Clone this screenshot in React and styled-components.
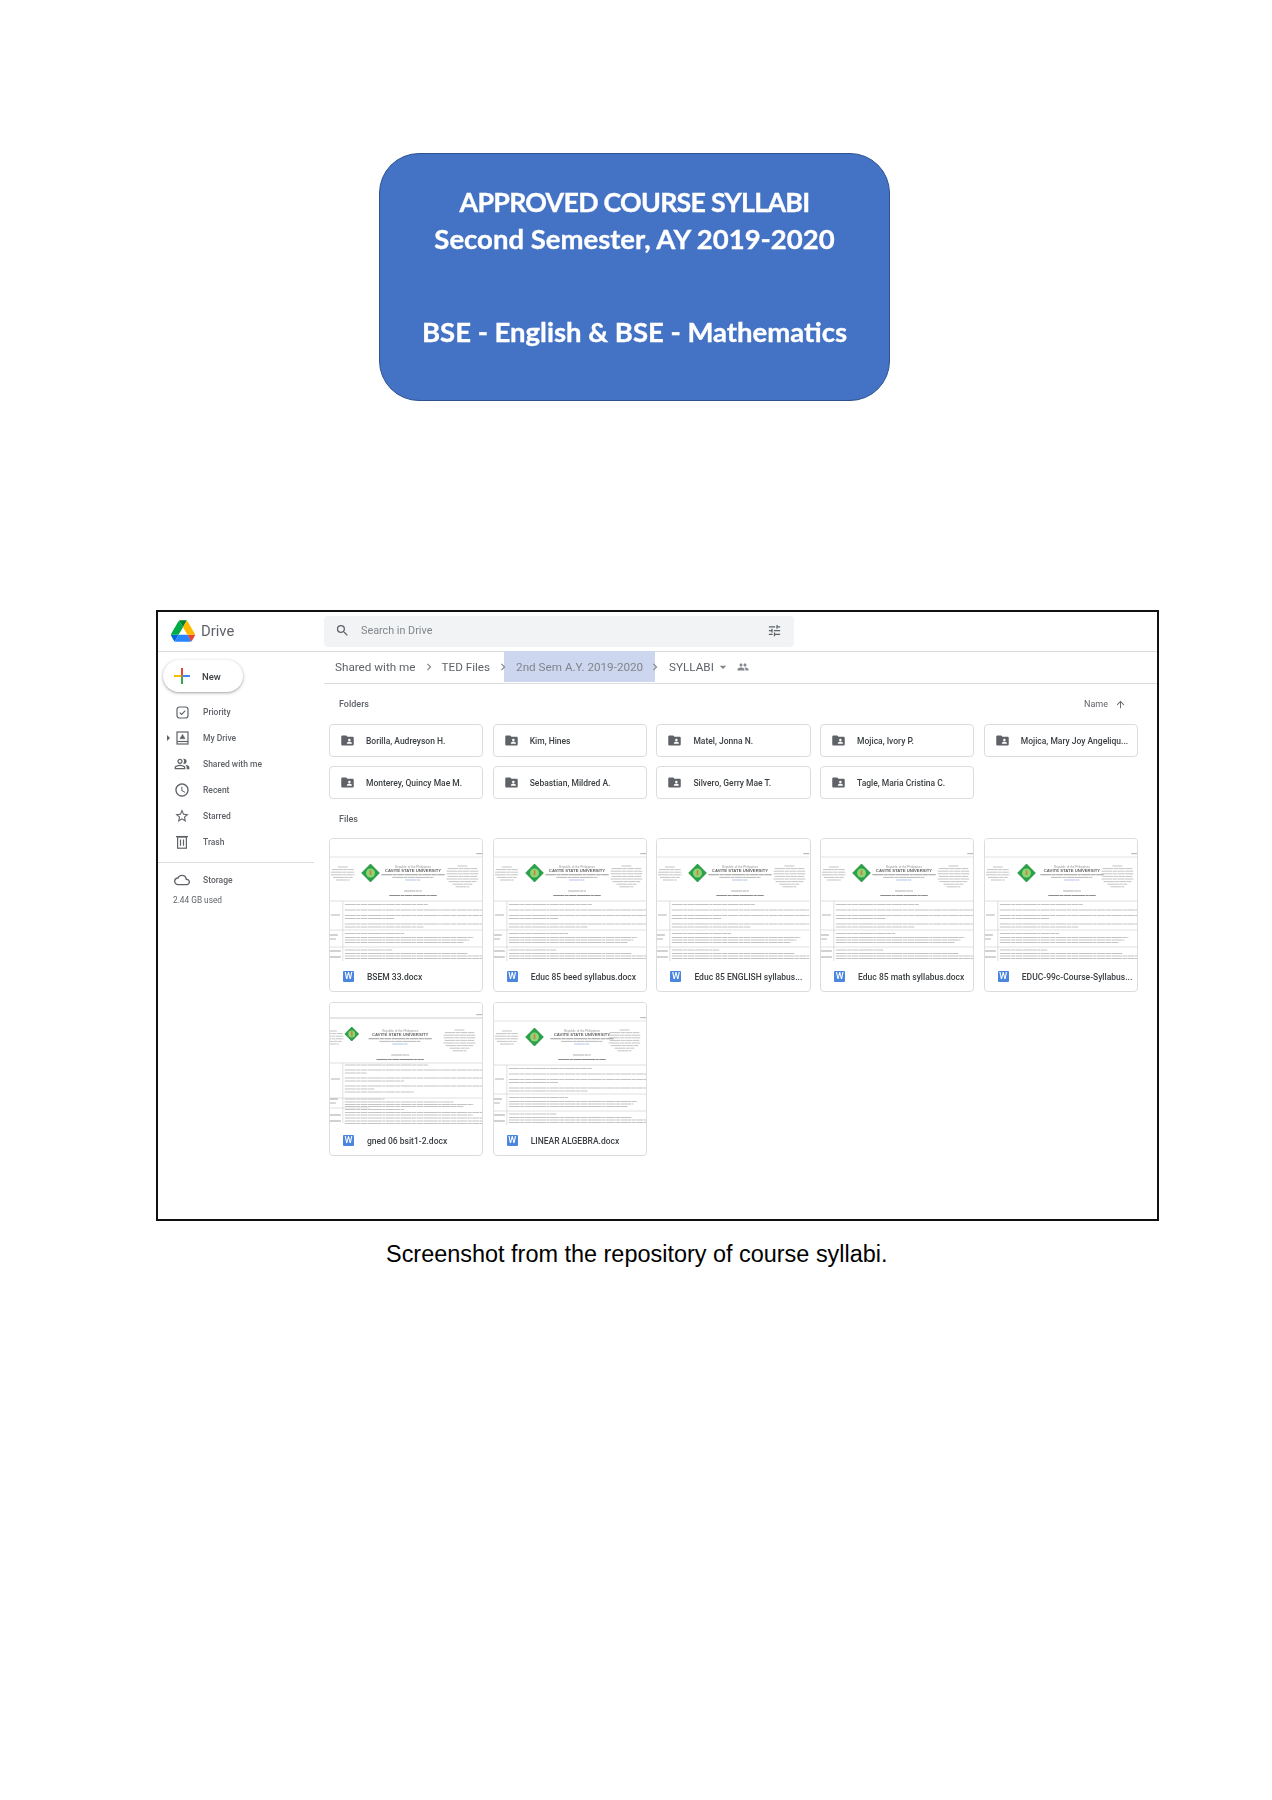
import React from "react";
import styled, { createGlobalStyle } from "styled-components";
import {
  MdSearch,
  MdTune,
  MdAccessTime,
  MdStarBorder,
  MdCloudQueue,
  MdFolderShared,
  MdPeople,
  MdArrowUpward,
  MdArrowDropDown,
  MdChevronRight,
  MdOutlinePeopleAlt,
} from "react-icons/md";

const GlobalStyle = createGlobalStyle`
  html, body {
    margin: 0;
    background: #fff;
  }
  * {
    box-sizing: border-box;
  }
`;

const Page = styled.div`
  width: 1272px;
  height: 1800px;
  padding-top: 153px;
  font-family: Roboto, sans-serif;
  overflow: hidden;
`;

const Banner = styled.div`
  width: 511px;
  height: 248px;
  margin-left: 379px;
  padding-top: 30px;
  background: #4472c4;
  border: 1.5px solid #2f528f;
  border-radius: 40px;
  color: #fff;
  font-family: Lato, sans-serif;
  font-weight: 700;
  font-size: 27.5px;
  line-height: 36.5px;
  text-align: center;
  -webkit-text-stroke: 0.35px #fff;
  filter: blur(0.3px);
`;

const BannerTitle = styled.span`
  font-size: 26.8px;
  letter-spacing: -0.75px;
`;

const BannerGap = styled.div`
  height: 56.5px;
`;

const Frame = styled.div`
  width: 1003px;
  height: 611px;
  margin: 209px 0 0 156px;
  border: 2px solid #111;
  background: #fff;
  filter: blur(0.35px);
`;

const TopBar = styled.div`
  display: flex;
  align-items: center;
  height: 40px;
  padding-bottom: 1px;
  border-bottom: 1px solid #dadce0;
`;

const Brand = styled.div`
  display: flex;
  align-items: center;
  gap: 6px;
  width: 166px;
  padding-left: 13px;
  color: #5f6368;
  font-size: 14.8px;
`;

const SearchBar = styled.div`
  display: flex;
  align-items: center;
  width: 470px;
  height: 31px;
  padding: 0 12px 1px 11px;
  border-radius: 4px;
  background: #f1f3f4;
  color: #80868b;
  font-size: 10.8px;
  svg {
    color: #5f6368;
  }
`;

const SearchText = styled.span`
  flex: 1;
  margin-left: 11px;
`;

const Body = styled.div`
  display: flex;
`;

const Sidebar = styled.nav`
  width: 166px;
  padding-top: 8px;
`;

const NewButton = styled.div`
  display: flex;
  align-items: center;
  gap: 12px;
  width: 80px;
  height: 32px;
  margin-left: 5px;
  padding-left: 11px;
  border-radius: 16px;
  background: #fff;
  box-shadow: 0 1px 2px rgba(60, 64, 67, 0.3), 0 1px 3px 1px rgba(60, 64, 67, 0.15);
  color: #3c4043;
  font-size: 9.5px;
  font-weight: 500;
`;

const NavList = styled.div`
  margin-top: 7px;
`;

const NavItem = styled.div`
  position: relative;
  display: flex;
  align-items: center;
  height: 26px;
  padding-left: 16px;
  color: #5f6368;
  font-size: 8.5px;
  font-weight: 500;
`;

const NavIcon = styled.span`
  display: flex;
  align-items: center;
  justify-content: center;
  width: 16px;
  margin-right: 13px;
  color: #5f6368;
`;

const Caret = styled.span`
  position: absolute;
  left: 9px;
  top: 10px;
  border-left: 3px solid #5f6368;
  border-top: 3px solid transparent;
  border-bottom: 3px solid transparent;
`;

const SideRule = styled.div`
  height: 1px;
  margin: 7px 0 4px;
  width: 156px;
  background: #dadce0;
`;

const StorageUsed = styled.div`
  margin: 2px 0 0 15px;
  color: #5f6368;
  font-size: 8.3px;
`;

const Main = styled.main`
  flex: 1;
`;

const Crumbs = styled.div`
  display: flex;
  align-items: center;
  height: 32px;
  padding: 0 0 2px 11px;
  border-bottom: 1px solid #dadce0;
  color: #5f6368;
  font-size: 11.7px;
`;

const Crumb = styled.span`
  white-space: nowrap;
`;

// the chevrons next to the selected crumb straddle its highlight
const CrumbSep = styled.span`
  position: relative;
  display: flex;
  justify-content: center;
  width: ${(p) => p.$w}px;
  margin: 0 ${(p) => p.$mr || 0}px 0 ${(p) => p.$ml || 0}px;
  color: #80868b;
`;

const Highlight = styled.span`
  display: flex;
  align-items: center;
  align-self: stretch;
  flex: none;
  width: 151px;
  height: 31px;
  margin-top: -1px;
  padding: 0 0 0 12px;
  background: #ccd6ef;
  color: #80868b;
  white-space: nowrap;
`;

const CaretDown = styled(MdArrowDropDown)`
  margin-left: 1px;
  color: #80868b;
`;

const PeopleMark = styled(MdPeople)`
  margin-left: 6px;
  color: #80868b;
`;

const Content = styled.div`
  padding: 0 19px 0 5px;
`;

const SectionRow = styled.div`
  display: flex;
  align-items: center;
  justify-content: space-between;
  height: ${(p) => p.$h}px;
  padding: 0 12px 0 10px;
  color: #5f6368;
  font-size: 9px;
  font-weight: 500;
`;

const SortBy = styled.span`
  display: flex;
  align-items: center;
  gap: 7px;
  font-weight: 400;
`;

const Grid = styled.div`
  display: grid;
  grid-template-columns: repeat(5, 1fr);
  gap: ${(p) => p.$gap}px 9.5px;
`;

const FolderCard = styled.div`
  display: flex;
  align-items: center;
  height: 33px;
  padding-left: 10px;
  border: 1px solid #dadce0;
  border-radius: 4px;
  color: #3c4043;
  font-size: 8.5px;
  font-weight: 500;
  svg {
    flex: none;
    color: #5f6368;
    margin-right: 11px;
  }
`;

const Name = styled.span`
  white-space: nowrap;
`;

const FileCard = styled.div`
  height: 154px;
  border: 1px solid #dadce0;
  border-radius: 4px;
  overflow: hidden;
`;

const Thumb = styled.svg`
  display: block;
  width: 100%;
  height: 122px;
  filter: blur(0.3px);
`;

const ThumbText = styled.text`
  font-family: "Liberation Sans", Arial, sans-serif;
  text-anchor: middle;
`;

const FileFoot = styled.div`
  display: flex;
  align-items: center;
  height: 30px;
  padding: 1px 0 0 13px;
  color: #3c4043;
  font-size: 8.5px;
  font-weight: 500;
`;

const WordBadge = styled.span`
  flex: none;
  width: 11px;
  height: 11px;
  margin-right: 13px;
  background: #4a86e0;
  border-radius: 1px;
  color: #fff;
  font-size: 9px;
  line-height: 11px;
  text-align: center;
`;

const Caption = styled.p`
  margin: 20px 0 0 386px;
  color: #000;
  font-family: "Liberation Sans", Arial, sans-serif;
  font-size: 23.45px;
  line-height: 26px;
  white-space: nowrap;
`;

const DriveLogo = () => (
  <svg width="24" height="22" viewBox="0 0 87.3 78">
    <path d="m6.6 66.85 3.85 6.65c.8 1.4 1.95 2.5 3.3 3.3l13.75-23.8h-27.5c0 1.55.4 3.1 1.2 4.5z" fill="#0066da" />
    <path d="m43.65 25-13.75-23.8c-1.35.8-2.5 1.9-3.3 3.3l-25.4 44a9.06 9.06 0 0 0 -1.2 4.5h27.5z" fill="#00ac47" />
    <path d="m73.55 76.8c1.35-.8 2.5-1.9 3.3-3.3l1.6-2.75 7.65-13.25c.8-1.4 1.2-2.95 1.2-4.5h-27.502l5.852 11.5z" fill="#ea4335" />
    <path d="m43.65 25 13.75-23.8c-1.35-.8-2.9-1.2-4.5-1.2h-18.5c-1.6 0-3.15.45-4.5 1.2z" fill="#00832d" />
    <path d="m59.8 53h-32.3l-13.75 23.8c1.35.8 2.9 1.2 4.5 1.2h50.8c1.6 0 3.15-.45 4.5-1.2z" fill="#2684fc" />
    <path d="m73.4 26.5-12.7-22c-.8-1.4-1.95-2.5-3.3-3.3l-13.75 23.8 16.15 28h27.45c0-1.55-.4-3.1-1.2-4.5z" fill="#ffba00" />
  </svg>
);

const PlusIcon = () => (
  <svg width="16" height="16" viewBox="0 0 16 16">
    <rect x="7" y="0" width="2" height="7" fill="#ea4335" />
    <rect x="0" y="7" width="7" height="2" fill="#fbbc04" />
    <rect x="7" y="9" width="2" height="7" fill="#34a853" />
    <rect x="9" y="7" width="7" height="2" fill="#4285f4" />
    <rect x="7" y="7" width="2" height="2" fill="#a08a3a" />
  </svg>
);

const PriorityIcon = () => (
  <svg width="13" height="13" viewBox="0 0 13 13" fill="none" stroke="currentColor">
    <rect x="1" y="1" width="11" height="11" rx="2.5" strokeWidth="1.2" />
    <path d="M3.7 6.6 5.6 8.5 9.3 4.6" strokeWidth="1.1" />
  </svg>
);

const MyDriveIcon = () => (
  <svg width="13" height="14" viewBox="0 0 13 14" fill="none" stroke="currentColor">
    <rect x="1" y="1" width="11" height="12" strokeWidth="1.2" />
    <path d="M1 10.5h11" strokeWidth="1.2" />
    <path d="M6.5 3.4 9 7.7H4z" fill="currentColor" strokeWidth="0.6" />
  </svg>
);

const TrashIcon = () => (
  <svg width="12" height="14" viewBox="0 0 12 14" fill="none" stroke="currentColor">
    <path d="M0 1.6h12" strokeWidth="1.3" />
    <rect x="1.6" y="2" width="8.8" height="11.2" strokeWidth="1.2" />
    <path d="M4.5 4.5v6.3M7.5 4.5v6.3" strokeWidth="1.2" />
  </svg>
);

// rows of the scanned syllabus page: [y, width]
const baseBody = [
  [65.5, 84], [71, 139], [76.5, 139], [79.5, 50], [85, 139], [88, 80],
  [94.5, 60], [98.5, 130], [101, 126], [103.5, 120],
  [111, 48], [114.5, 124], [117, 139], [119.5, 139],
];

const gnedBody = [
  [62, 84], [67, 139], [70, 22], [75, 139], [78, 60], [83, 139], [86, 30], [89, 70],
  [96, 40], [99, 110], [101.5, 130], [103.5, 120],
  [106.5, 60], [109.5, 139], [112, 130], [115, 139], [118, 139], [120.5, 139],
];

const wordGaps = "11 .5 4 .5 7 .5 14 .5 3 .5 9 .5 5 .5";

const TextLine = ({ x, y, w, color = "#bcbcbc", h = 0.9 }) => (
  <line x1={x} x2={x + w} y1={y} y2={y} stroke={color} strokeWidth={h} strokeDasharray={wordGaps} />
);

const sideBlock = (cx, top, widths) =>
  widths.map((w, i) => <TextLine key={i} x={cx - w / 2} y={top + i * 2.6} w={w} />);

const DocThumb = ({
  logoX = 41,
  textX = 84,
  ruleY = 18,
  logoR = 9,
  logoY = 34,
  rules = "M0 62h154M0 91h154M0 108h154M13 62v60",
  body = baseBody,
  leftX = 13,
  rightX = 134,
}) => (
  <Thumb viewBox="0 0 154 122" preserveAspectRatio="none">
    <rect width="154" height="122" fill="#fff" />
    <path d={`M0 ${ruleY}h154`} stroke="#dcdcdc" strokeWidth="0.8" />
    <rect x="148" y={ruleY - 4} width="6" height="1.2" fill="#bbb" />
    {sideBlock(leftX, 28, [10, 22, 24, 24, 20, 14])}
    {sideBlock(rightX, 27, [10, 30, 32, 32, 30, 32, 28, 20, 14])}
    <path
      d={`M${logoX} ${logoY - logoR}l${logoR} ${logoR}-${logoR} ${logoR}-${logoR}-${logoR}z`}
      fill="#27a445"
      stroke="#127a2c"
      strokeWidth="0.6"
    />
    <circle cx={logoX} cy={logoY} r={logoR * 0.5} fill="#8fd47a" />
    <rect x={logoX - 0.9} y={logoY - 2.8} width="1.8" height="5" fill="#c9873a" />
    <ThumbText x={textX} y="29" fontSize="3.1" fill="#999">Republic of the Philippines</ThumbText>
    <ThumbText x={textX} y="33" fontSize="4.3" fontWeight="700" fill="#666">CAVITE STATE UNIVERSITY</ThumbText>
    <TextLine x={textX - 32} y={35.8} w={64} color="#9a9a9a" h={1.1} />
    <TextLine x={textX - 21} y={38.4} w={42} color="#b0b0b0" />
    <TextLine x={textX - 8} y={41} w={16} color="#a9bbe9" />
    <TextLine x={textX - 9} y={52} w={18} color="#a5a5a5" />
    <TextLine x={textX - 24} y={56.5} w={48} color="#8c8c8c" h={1.2} />
    <path d={rules} stroke="#d2d2d2" strokeWidth="0.7" fill="none" />
    <TextLine x={1} y={76} w={9} color="#aaa" />
    <TextLine x={0} y={96} w={8} color="#999" />
    <TextLine x={0} y={100} w={6} color="#aaa" />
    <TextLine x={0} y={112} w={11} color="#999" />
    <TextLine x={0} y={118} w={11} color="#999" />
    {body.map(([y, w], i) => (
      <TextLine key={i} x={15} y={y} w={w} />
    ))}
  </Thumb>
);

const navItems = [
  { label: "Priority", icon: <PriorityIcon /> },
  { label: "My Drive", icon: <MyDriveIcon />, caret: true },
  { label: "Shared with me", icon: <MdOutlinePeopleAlt size={16} /> },
  { label: "Recent", icon: <MdAccessTime size={16} /> },
  { label: "Starred", icon: <MdStarBorder size={16} /> },
  { label: "Trash", icon: <TrashIcon /> },
];

const folders = [
  "Borilla, Audreyson H.",
  "Kim, Hines",
  "Matel, Jonna N.",
  "Mojica, Ivory P.",
  "Mojica, Mary Joy Angeliqu...",
  "Monterey, Quincy Mae M.",
  "Sebastian, Mildred A.",
  "Silvero, Gerry Mae T.",
  "Tagle, Maria Cristina C.",
];

const files = [
  { name: "BSEM 33.docx" },
  { name: "Educ 85 beed syllabus.docx" },
  { name: "Educ 85 ENGLISH syllabus..." },
  { name: "Educ 85 math syllabus.docx" },
  { name: "EDUC-99c-Course-Syllabus...", logoX: 42, textX: 88 },
  {
    name: "gned 06 bsit1-2.docx",
    logoX: 22,
    logoY: 31,
    logoR: 7,
    textX: 71,
    ruleY: 15,
    leftX: 2,
    rightX: 131,
    rules: "M0 15h154M0 60h154M0 95h154M0 105h40M13 60v60",
    body: gnedBody,
  },
  { name: "LINEAR ALGEBRA.docx", textX: 89, rightX: 132 },
];

function App() {
  return (
    <Page>
      <GlobalStyle />
      <Banner>
        <BannerTitle>APPROVED COURSE SYLLABI</BannerTitle>
        <br />
        Second Semester, AY 2019-2020
        <BannerGap />
        BSE - English &amp; BSE - Mathematics
      </Banner>

      <Frame>
        <TopBar>
          <Brand>
            <DriveLogo />
            Drive
          </Brand>
          <SearchBar>
            <MdSearch size={15} />
            <SearchText>Search in Drive</SearchText>
            <MdTune size={15} />
          </SearchBar>
        </TopBar>

        <Body>
          <Sidebar>
            <NewButton>
              <PlusIcon />
              New
            </NewButton>
            <NavList>
              {navItems.map((item) => (
                <NavItem key={item.label}>
                  {item.caret && <Caret />}
                  <NavIcon>{item.icon}</NavIcon>
                  {item.label}
                </NavItem>
              ))}
            </NavList>
            <SideRule />
            <NavItem>
              <NavIcon>
                <MdCloudQueue size={16} />
              </NavIcon>
              Storage
            </NavItem>
            <StorageUsed>2.44 GB used</StorageUsed>
          </Sidebar>

          <Main>
            <Crumbs>
              <Crumb>Shared with me</Crumb>
              <CrumbSep $w={26}>
                <MdChevronRight size={14} />
              </CrumbSep>
              <Crumb>TED Files</Crumb>
              <CrumbSep $w={14} $ml={6} $mr={-6}>
                <MdChevronRight size={14} />
              </CrumbSep>
              <Highlight>2nd Sem A.Y. 2019-2020</Highlight>
              <CrumbSep $w={14} $ml={-7} $mr={7}>
                <MdChevronRight size={14} />
              </CrumbSep>
              <Crumb>SYLLABI</Crumb>
              <CaretDown size={16} />
              <PeopleMark size={12} />
            </Crumbs>

            <Content>
              <SectionRow $h={40}>
                Folders
                <SortBy>
                  Name
                  <MdArrowUpward size={11} />
                </SortBy>
              </SectionRow>
              <Grid $gap={9}>
                {folders.map((name) => (
                  <FolderCard key={name}>
                    <MdFolderShared size={15} />
                    <Name>{name}</Name>
                  </FolderCard>
                ))}
              </Grid>

              <SectionRow $h={39}>Files</SectionRow>
              <Grid $gap={10}>
                {files.map(({ name, ...thumb }) => (
                  <FileCard key={name}>
                    <DocThumb {...thumb} />
                    <FileFoot>
                      <WordBadge>W</WordBadge>
                      <Name>{name}</Name>
                    </FileFoot>
                  </FileCard>
                ))}
              </Grid>
            </Content>
          </Main>
        </Body>
      </Frame>

      <Caption>Screenshot from the repository of course syllabi.</Caption>
    </Page>
  );
}

export default App;
